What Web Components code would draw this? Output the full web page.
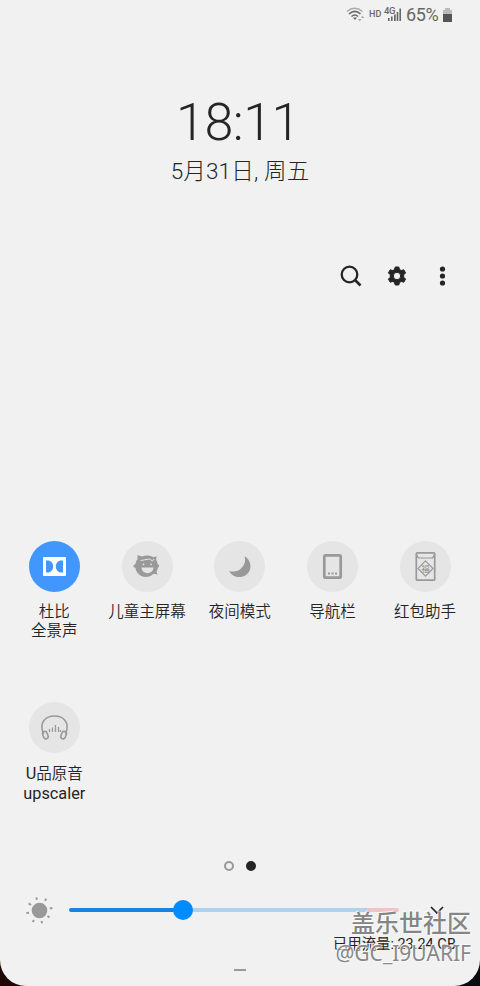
<!DOCTYPE html>
<html lang="zh-CN"><head><meta charset="utf-8"><title>Quick panel</title>
<style>
html,body{margin:0;height:100%;overflow:hidden}
body{background:linear-gradient(90deg,#210704 50%,#090b0e 50%);font-family:Roboto,"Noto Sans CJK SC",sans-serif;color:#252525}
</style></head><body>
<quick-panel></quick-panel>
<script>
class Base extends HTMLElement{
  connectedCallback(){ if(this.shadowRoot) return;
    this.attachShadow({mode:'open'}).innerHTML=this.view().trim(); }
}
customElements.define('status-bar',class extends Base{view(){return `
<style>:host{display:flex;height:30px;box-sizing:border-box;padding-left:346px;color:#666;align-items:center}
svg{display:block;flex:none}.hd{font-size:9px;font-weight:500;width:13px;margin-left:3px;line-height:14px;margin-top:-2px;white-space:nowrap}
.sig{position:relative;width:17px;height:16px;margin-left:3px}.sig span{position:absolute;left:-1px;top:-1px;font-size:9.5px;line-height:9px;font-weight:500;letter-spacing:-.5px}
.sig svg{position:absolute;left:0;top:0}.pct{font-size:18px;line-height:20px;margin-left:4px;width:36px;letter-spacing:-.4px;white-space:nowrap}</style>
<svg width="20" height="18" viewBox="0 0 20 18" fill="none" stroke-width="1.6"><path d="M1 5.5Q8.5-1 16.5 5.5" stroke="#aaa"/><path d="M3 8Q9 2.8 14.5 8M5.5 10.5Q9 7.5 12 10.5" stroke="#666"/><path d="M7 11.5h4l-2 2.5z" fill="#666"/><path d="M12 13l1.8 2.5L15.5 13zM15 12l1.5-2.5L18.3 12z" fill="#aaa"/></svg>
<span class="hd">HD</span><div class="sig"><span>4G</span><svg width="17" height="16" fill="#666"><path d="M3 11h1.6v3H3zM6 9.5h1.6v4.5H6zM9 7.5h1.7v6.5H9zM11.7 5h1.6v9h-1.6zM14.4 1.5H16v12.5h-1.6z"/></svg></div>
<span class="pct">65%</span><svg width="9" height="14" style="margin-top:-1px;margin-left:1px"><path d="M2 0h5v2h2v4H0V2h2z" fill="#bbb"/><path d="M0 6h9v8H0z" fill="#555"/></svg>`}});
customElements.define('clock-block',class extends Base{view(){return `
<style>:host{display:flex;flex-direction:column;align-items:center;height:222px;box-sizing:border-box;padding-top:63px}
.t{font-size:52px;font-weight:300;line-height:60px;letter-spacing:-.5px;margin-left:-4px}.d{font-size:22.5px;font-weight:300;line-height:30px;margin-top:3px;white-space:pre;letter-spacing:.15px}</style>
<div class="t">18:11</div><div class="d">5月31日, 周五</div>`}});
customElements.define('panel-actions',class extends Base{view(){return `
<style>:host{display:flex;justify-content:flex-end;align-items:center;height:48px;gap:22px;padding-right:25px}svg{display:block}</style>
<svg width="24" height="24" fill="none" stroke="#252525"><circle cx="10.5" cy="10.5" r="7.8" stroke-width="2.3"/><path d="M16 16l5.5 5.5" stroke-width="2.7"/></svg>
<svg width="24" height="24" viewBox="0 0 24 24"><path fill="#252525" stroke="#252525" stroke-linejoin="round" fill-rule="evenodd" d="M10.2 3h3.6l.7 2.5 1.7 1 2.6-.7 1.8 3.1-1.9 1.9v2.4l1.9 1.9-1.8 3.1-2.6-.7-1.7 1-.7 2.5H10.2l-.7-2.5-1.7-1-2.6.7-1.8-3.1 1.9-1.9v-2.4L3.4 8.9l1.8-3.1 2.6.7 1.7-1zM12 8.3a3.7 3.7 0 1 0 0 7.4 3.7 3.7 0 0 0 0-7.4z"/></svg>
<svg width="24" height="24" fill="#252525"><circle cx="11.5" cy="5" r="2.6"/><circle cx="11.5" cy="12" r="2.6"/><circle cx="11.5" cy="19" r="2.6"/></svg>`}});
const icons={
dolby:`<path fill="#fff" fill-rule="evenodd" d="M15 16h21a1 1 0 0 1 1 1v17a1 1 0 0 1-1 1H15a1 1 0 0 1-1-1V17a1 1 0 0 1 1-1zM17 19.500v12h1.500c3.600 0 5.700-2.700 5.700-6s-2.100-6-5.700-6zM34 19.500v12H32.500c-3.600 0-5.700-2.700-5.700-6s2.100-6 5.700-6z"/>`,
kids:`<path fill="#999" d="M15.500 14l4.500 1.500c4-1.700 8-1.500 11.500.8l3-1-.3 3.700q1.200 2 1.500 4.300c2 .5 2 3 .1 3.500-.2 1.500-.7 2.500-1.300 3.700l1 3-4-.8c-5 5-12.500 4-16-1-1.300-1.800-1.700-3-2-4.800-2.700-.3-2.800-3 0-3.800.2-2 .9-3.500 2-4.900z"/><path d="M18.500 19.500l9-1.500 3 2 1.500-2" fill="none" stroke="#e5e5e5" stroke-width="1"/><circle cx="21.500" cy="23.300" r=".9" fill="#e5e5e5"/><circle cx="29" cy="23.300" r=".9" fill="#e5e5e5"/><path d="M19.500 26.500h12c-.5 7.500-11.500 7.500-12 0z" fill="#e5e5e5"/>`,
moon:`<path fill="#999" d="M30.500 15c8 5 7.500 15 1.500 19-6 4-14 2-17-4 4 1 9 1 12.500-3 4-4 4-8 3-12z"/>`,
nav:`<rect x="17.3" y="14.3" width="16.4" height="22.4" rx="1.5" fill="none" stroke="#999" stroke-width="2.7"/><path fill="#999" d="M21 31.5h2v2h-2zM24.5 31.5h2v2h-2zM28 31.5h2v2h-2z"/>`,
red:`<rect x="16.3" y="11.8" width="18.4" height="27.4" rx="1" fill="none" stroke="#999" stroke-width="1.7"/><path fill="none" stroke="#999" stroke-width="1.2" d="M16.5 13.5q1 3.5 3.5 3.5h11q2.5 0 3.5-3.5M25.5 19.8l7.5 7.7-7.5 7.7-7.5-7.7z"/><text x="25.5" y="30.6" text-anchor="middle" font-size="8.5" fill="#888">福</text>`,
audio:`<path fill="none" stroke="#999" stroke-width="1.6" d="M14.5 32C9.5 20 17 14 25.5 14S41.5 20 36.5 32"/><g fill="none" stroke="#999" stroke-width="1.6"><rect x="14" y="29.5" width="4.6" height="7.5" rx="2.3" transform="rotate(-20 16 33)"/><rect x="32.4" y="29.5" width="4.6" height="7.5" rx="2.3" transform="rotate(20 35 33)"/></g><path d="M20.5 27v3M23.5 25.5v4.500M26.5 23v7M29.5 25v5M31.500 28v2" stroke="#999" stroke-width="1.3"/>`};
customElements.define('quick-tile',class extends Base{view(){const on=this.hasAttribute('on');return `
<style>:host{display:flex;flex-direction:column;align-items:center;width:92.7px;text-align:center}
.i{width:51px;height:51px;border-radius:50%;background:${on?'#4297ff':'#e5e5e5'}}svg{display:block}
.l{font-size:15.5px;font-weight:350;line-height:19px;margin-top:11px;white-space:pre}</style>
<div class="i"><svg width="51" height="51" viewBox="0 0 51 51">${icons[this.getAttribute('icon')]}</svg></div><div class="l"><slot></slot></div>`}});
customElements.define('tile-grid',class extends Base{view(){return `
<style>:host{display:grid;grid-template-columns:repeat(5,92.7px);grid-auto-rows:161px;padding-left:8px;margin-top:241px}.w{font-size:16.3px;font-weight:400}</style>
<quick-tile icon="dolby" on>杜比
全景声</quick-tile><quick-tile icon="kids">儿童主屏幕</quick-tile><quick-tile icon="moon">夜间模式</quick-tile><quick-tile icon="nav">导航栏</quick-tile><quick-tile icon="red">红包助手</quick-tile><quick-tile icon="audio"><span class="w">U</span>品原音
<span class="w">upscaler</span></quick-tile>`}});
customElements.define('page-dots',class extends Base{view(){return `
<style>:host{display:flex;justify-content:center;gap:12px;height:10px;margin-top:-2px}i{width:10px;height:10px;box-sizing:border-box;border-radius:50%;border:2px solid #999}i+i{background:#252525;border-color:#252525}</style><i></i><i></i>`}});
customElements.define('brightness-bar',class extends Base{view(){return `
<style>:host{display:flex;height:30px;margin-top:24px;padding-left:26px}svg{display:block}
.bar{display:grid;width:330px;height:30px;margin-left:15px;align-items:center}.bar>*{grid-area:1/1}
.track{height:4px;border-radius:2px;background:linear-gradient(90deg,#1584e5 114px,#b0d1ee 114px 298px,#efc4c7 298px)}
.knob{width:20px;height:20px;border-radius:50%;background:#008cff;margin-left:104px}.chev{margin:11px 0 0 30px}</style>
<svg width="28" height="30"><circle cx="13.5" cy="15.5" r="7.8" fill="#999"/><g stroke="#999" stroke-width="2"><path d="M11 4.800l-.7-2.300M19 5.800l1.300-2M23.800 13.500l2.600-.5M21.5 21l2 1.500M15.500 26l.7 2.300M8 25l-1.300 2M3 17.800l-2.600.3M5 10l-2.300-1.600"/></g></svg>
<div class="bar"><div class="track"></div><div class="knob"></div></div>
<svg class="chev" width="16" height="12"><path d="M2 1l6 6 6-6" fill="none" stroke="#252525" stroke-width="1.7"/></svg>`}});
customElements.define('data-usage',class extends Base{view(){return `
<style>:host{display:block;text-align:right;padding-right:24px;font-size:14.4px;line-height:20px;height:20px;margin-top:10px;white-space:pre}</style><slot></slot>`}});
customElements.define('community-mark',class extends Base{view(){return `
<style>:host{position:absolute;right:9px;top:906px;text-align:right;color:#858585;text-shadow:-1px -1px 0 #fffc,1px 1px 0 #fff8}
.a{font:500 24px/32px "Noto Sans CJK SC",sans-serif}.b{font:400 21px/28px "Noto Sans",sans-serif;color:#888;margin-top:1px}</style>
<div class="a">盖乐世社区</div><div class="b">@GC_I9UARIF</div>`}});
customElements.define('quick-panel',class extends Base{view(){return `
<style>:host{display:block;position:relative;width:480px;height:986px;background:#f1f1f1;border-radius:0 0 26px 26px;overflow:hidden}
.grip{width:12px;height:2px;background:#999;margin:14px auto 0}</style>
<status-bar></status-bar><clock-block></clock-block><panel-actions></panel-actions><tile-grid></tile-grid><page-dots></page-dots><brightness-bar></brightness-bar><data-usage>已用流量: 23.24 GB</data-usage><div class="grip"></div><community-mark></community-mark>`}});
</script></body></html>
